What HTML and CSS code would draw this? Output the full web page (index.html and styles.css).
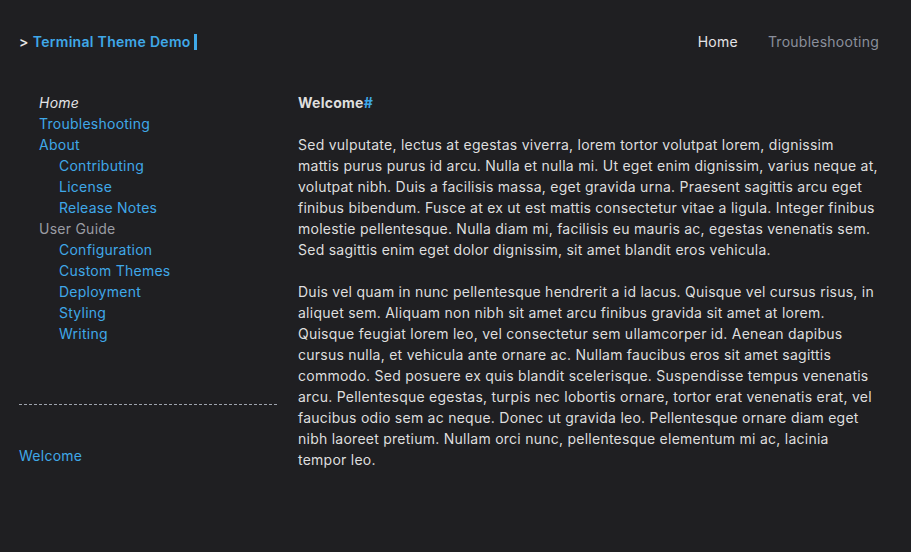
FILE: index.html
```html
<!DOCTYPE html>
<html lang="en">
<head>
<meta charset="utf-8">
<title>Terminal Theme Demo</title>
<link rel="stylesheet" href="styles.css">
</head>
<body>
<header class="header">
  <div class="brand"><span class="prompt">&gt;</span> <a class="brand-name" href="#">Terminal Theme Demo</a><span class="cursor"></span></div>
  <nav class="topnav">
    <a class="topnav-item active" href="#">Home</a>
    <a class="topnav-item" href="#">Troubleshooting</a>
  </nav>
</header>
<div class="layout">
  <aside class="sidebar">
    <ul class="menu">
      <li><span class="current">Home</span></li>
      <li><a href="#">Troubleshooting</a></li>
      <li><a href="#">About</a>
        <ul class="menu sub">
          <li><a href="#">Contributing</a></li>
          <li><a href="#">License</a></li>
          <li><a href="#">Release Notes</a></li>
        </ul>
      </li>
      <li><span class="section">User Guide</span>
        <ul class="menu sub">
          <li><a href="#">Configuration</a></li>
          <li><a href="#">Custom Themes</a></li>
          <li><a href="#">Deployment</a></li>
          <li><a href="#">Styling</a></li>
          <li><a href="#">Writing</a></li>
        </ul>
      </li>
    </ul>
    <hr class="divider">
    <nav class="toc"><a href="#">Welcome</a></nav>
  </aside>
  <main class="content">
    <h1 class="title">Welcome<a class="anchor" href="#">#</a></h1>
    <p>Sed vulputate, lectus at egestas viverra, lorem tortor volutpat lorem, dignissim mattis purus purus id arcu. Nulla et nulla mi. Ut eget enim dignissim, varius neque at, volutpat nibh. Duis a facilisis massa, eget gravida urna. Praesent sagittis arcu eget finibus bibendum. Fusce at ex ut est mattis consectetur vitae a ligula. Integer finibus molestie pellentesque. Nulla diam mi, facilisis eu mauris ac, egestas venenatis sem. Sed sagittis enim eget dolor dignissim, sit amet blandit eros vehicula.</p>
    <p>Duis vel quam in nunc pellentesque hendrerit a id lacus. Quisque vel cursus risus, in aliquet sem. Aliquam non nibh sit amet arcu finibus gravida sit amet at lorem. Quisque feugiat lorem leo, vel consectetur sem ullamcorper id. Aenean dapibus cursus nulla, et vehicula ante ornare ac. Nullam faucibus eros sit amet sagittis commodo. Sed posuere ex quis blandit scelerisque. Suspendisse tempus venenatis arcu. Pellentesque egestas, turpis nec lobortis ornare, tortor erat venenatis erat, vel faucibus odio sem ac neque. Donec ut gravida leo. Pellentesque ornare diam eget nibh laoreet pretium. Nullam orci nunc, pellentesque elementum mi ac, lacinia tempor leo.</p>
  </main>
</div>
</body>
</html>
```
FILE: styles.css
```css
html, body {
  background: #1f1f22;
}
body {
  margin: 0;
  padding: 0 19px;
  color: #dedede;
  font-family: Inter, "Noto Sans", sans-serif;
  font-size: 14px;
  line-height: 21px;
  letter-spacing: 0.25px;
}
a {
  color: #3fa8e8;
  text-decoration: none;
}
.header {
  display: flex;
  justify-content: space-between;
  align-items: center;
  padding-top: 31px;
  height: 21px;
}
.brand {
  display: flex;
  align-items: center;
  font-weight: 600;
  letter-spacing: 0.3px;
}
.prompt {
  color: #e6e6e6;
  margin-right: 4px;
}
.brand-name {
  color: #3fa8e8;
}
.cursor {
  display: inline-block;
  width: 3px;
  height: 16px;
  background: #3fa8e8;
  margin-left: 3px;
}
.topnav {
  display: flex;
  gap: 30px;
  padding-right: 13px;
}
.topnav-item {
  color: #8a8f9c;
}
.topnav-item.active {
  color: #e4e4e6;
}
.layout {
  display: flex;
  gap: 21px;
  margin-top: 40px;
}
.sidebar {
  width: 258px;
  flex-shrink: 0;
}
.menu {
  list-style: none;
  margin: 0;
  padding: 0 0 0 20px;
}
.current {
  font-style: italic;
  color: #e4e4e6;
}
.section {
  color: #9a9ca3;
}
.divider {
  border: 0;
  border-top: 1px dashed #9ea3ad;
  margin: 60px 0 0;
}
.toc {
  margin-top: 40px;
}
.content {
  width: 580px;
}
.title {
  font-size: 14px;
  font-weight: 700;
  line-height: 21px;
  margin: 0 0 21px;
}
.anchor {
  color: #3fa8e8;
}
.content p {
  margin: 0 0 21px;
}
```
